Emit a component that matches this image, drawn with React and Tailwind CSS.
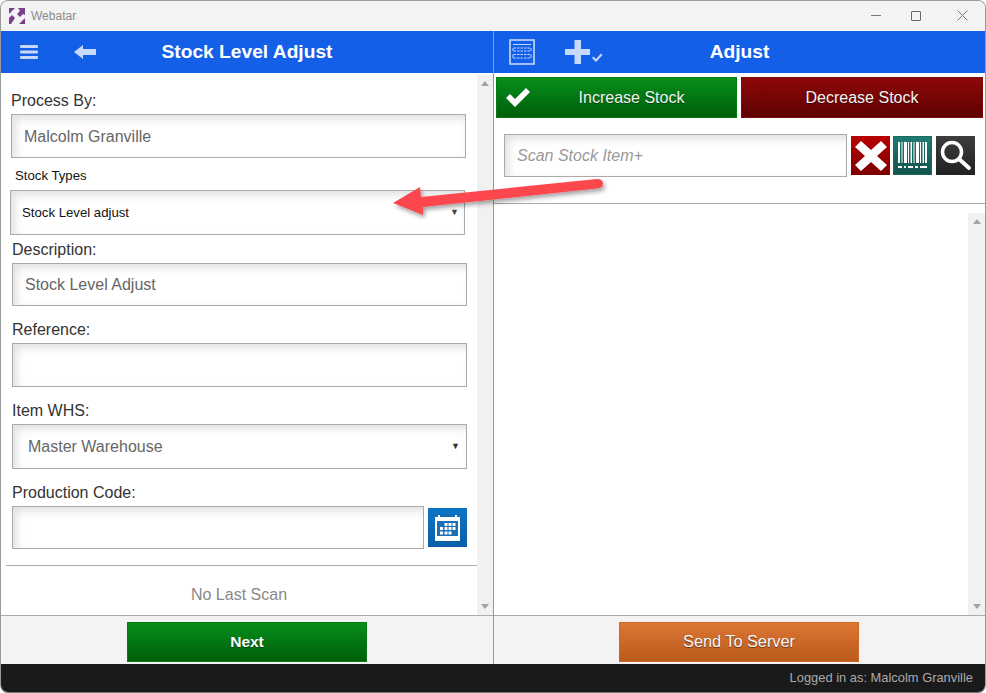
import React from 'react';

const inputCls = 'border border-[#aaa] bg-white shadow-[inset_4px_4px_9px_rgba(0,0,0,0.12)] flex items-center';

function Field({ label, value, className, boxCls, select }) {
  return (
    <div className={className}>
      <div className="text-[16px] leading-[18px] text-[#333] mb-[4px]">{label}</div>
      <div className={`${inputCls} ${boxCls} pr-[6px] text-[16px] text-[#666] justify-between`}>
        <span>{value}</span>
        {select && <span className="text-[9px] text-[#333]">▼</span>}
      </div>
    </div>
  );
}

function ScrollBar({ className }) {
  return (
    <div className={`bg-[#f1f1f1] flex flex-col justify-between items-center py-[6px] shrink-0 ${className}`}>
      <div className="w-0 h-0 border-x-[4px] border-x-transparent border-b-[5px] border-b-[#a3a3a3]" />
      <div className="w-0 h-0 border-x-[4px] border-x-transparent border-t-[5px] border-t-[#a3a3a3]" />
    </div>
  );
}

function Logo() {
  return (
    <svg width="16" height="16" viewBox="0 0 16 16" className="shrink-0">
      <path d="M0 0h6l-6 6z" fill="#7c3f8c" />
      <path d="M0 16v-6l3-3 3 3-4 6z" fill="#7c3f8c" />
      <path d="M9 0h7v7l-2-1-3 3-3-3 3-3z" fill="#7c3f8c" />
      <path d="M16 16h-6l6-6z" fill="#7c3f8c" />
    </svg>
  );
}

function KeyboardIcon() {
  return (
    <svg width="26" height="26" viewBox="0 0 26 26" fill="none" stroke="#c6d8fb">
      <rect x="1" y="1" width="24" height="24" strokeWidth="1.6" />
      <path d="M4 5.500h18" strokeWidth="1" />
      <path d="M4.500 9h17M4.500 12h17M4.500 15.500h17M4.500 19h17" strokeWidth="1.2" strokeDasharray="2.5 1" />
      <path d="M4 9v3M22 9v3M4 15.500v3.500M22 15.500v3.500" strokeWidth="1" />
    </svg>
  );
}

function PlusCheck() {
  return (
    <svg width="40" height="26" viewBox="0 0 40 26" fill="#c6d8fb">
      <path d="M9.500 1h6.500v9h9v6h-9v9h-6.500v-9H0v-6h9.500z" />
      <path d="M27 19l1.500-1.500 2.500 2.500L36 14.500l1.500 1.500-6.500 7z" />
    </svg>
  );
}

function Barcode() {
  return (
    <svg width="29" height="27" viewBox="0 0 29 27" fill="#fff">
      <path d="M0 0h2v21H0zM3.500 0h1v21h-1zM6 0h3v21H6zM10 0h1v21h-1zM12.500 0h1.500v21h-1.500zM15.500 0h1v21h-1zM18 0h3v21h-3zM22 0h1v21h-1zM24.500 0h1.500v21h-1.500zM27 0h2v21h-2z" />
      <path d="M0 24h4v2H0zM6 24h2v2H6zM10 24h5v2h-5zM17 24h3v2h-3zM22 24h7v2h-7z" />
    </svg>
  );
}

function Search() {
  return (
    <svg width="33" height="33" viewBox="0 0 33 33" fill="none" stroke="#fff">
      <circle cx="13" cy="13" r="9.500" strokeWidth="3.500" />
      <path d="M20 20l10 9" strokeWidth="4" strokeLinecap="round" />
    </svg>
  );
}

function Calendar() {
  return (
    <svg width="25" height="26" viewBox="0 0 25 26">
      <path d="M0 2h3v-2h2v2h15v-2h2v2h3v24H0z" fill="#fff" />
      <path d="M2 6h21v18H2z" fill="#1a6fb8" />
      <path d="M9.500 8h3v3h-3zM13.500 8h3v3h-3zM17.500 8h3v3h-3zM5 12h3v3H5zM9.500 12h3v3h-3zM13.500 12h3v3h-3zM17.500 12h3v3h-3zM5 16.500h3v3H5zM9.500 16.500h3v3h-3zM13.500 16.500h3v3h-3z" fill="#fff" />
      <path d="M2 21h21v3H2z" fill="#fff" />
    </svg>
  );
}

function Arrow() {
  return (
    <svg className="absolute left-[385px] top-[170px]" width="230" height="50" viewBox="0 0 230 50">
      <defs>
        <filter id="sh" x="-10%" y="-30%" width="120%" height="170%">
          <feDropShadow dx="2" dy="3" stdDeviation="2" floodColor="#000" floodOpacity="0.35" />
        </filter>
      </defs>
      <g filter="url(#sh)">
        <path d="M8 33 L35 17 L36 27 L212 9 Q218 9 218 13.500 Q218 18 212 18.500 L38 37 L38 45 Z" fill="#fd4650" />
      </g>
    </svg>
  );
}

export default function App() {
  return (
    <div className="relative w-[986px] h-[693px] bg-white overflow-hidden" style={{ fontFamily: '"Liberation Sans", Arial, sans-serif' }}>
      <div className="absolute inset-0 rounded-[8px] border border-[#9a9a9a] border-b-[#777] overflow-hidden flex flex-col">
        {/* title bar */}
        <div className="h-[30px] bg-[#f3f3f3] flex items-center pl-[8px] shrink-0">
          <Logo />
          <span className="ml-[6px] text-[12px] text-[#8b8b8b]">Webatar</span>
          <div className="ml-auto flex items-center text-[#666] -mt-[1px]">
            <div className="w-[10px] h-px bg-[#777] mr-[30px]" />
            <div className="w-[10px] h-[10px] border border-[#666] rounded-[1px] mr-[36px]" />
            <svg width="11" height="11" viewBox="0 0 11 11" stroke="#777" className="mr-[17px]"><path d="M0.500 0.500l10 10M10.500 0.500l-10 10" /></svg>
          </div>
        </div>

        {/* body */}
        <div className="flex flex-1 min-h-0">
          {/* left */}
          <div className="w-[493px] border-r border-[#999] flex flex-col shrink-0">
            <div className="h-[42px] bg-[#145fe8] flex items-center relative shrink-0">
              <svg width="18" height="14" viewBox="0 0 18 14" fill="#c6d8fb" className="ml-[19px]">
                <rect y="0" width="18" height="3" rx="1" />
                <rect y="5.500" width="18" height="3" rx="1" />
                <rect y="11" width="18" height="3" rx="1" />
              </svg>
              <svg width="22" height="14" viewBox="0 0 22 14" fill="#c6d8fb" className="ml-[36px]">
                <path d="M0 7l9-7v4h13v6H9v4z" />
              </svg>
              <div className="absolute inset-x-0 text-center text-white font-bold text-[19.2px]">Stock Level Adjust</div>
            </div>
            <div className="flex flex-1 min-h-0 bg-white">
              <div className="flex-1 min-w-0 flex flex-col">
                <div className="pl-[10px] pr-[11px] pt-[20px]">
                  <div className="text-[16px] leading-[18px] text-[#333] mb-[4px] -mt-[1px]">Process By:</div>
                  <div className={`${inputCls} h-[44px] pl-[12px] pt-[1px] text-[16px] text-[#666]`}>Malcolm Granville</div>
                </div>
                <div className="pl-[9px] pr-[12px]">
                  <div className="pl-[5px] mt-[10px] mb-[7px] text-[13.200px] leading-[15px] text-[#111]">Stock Types</div>
                  <div className={`${inputCls} h-[45px] pl-[11px] pr-[5px] text-[13.200px] text-[#111] justify-between`}>
                    <span>Stock Level adjust</span>
                    <span className="text-[9px] text-[#444]">▼</span>
                  </div>
                </div>
                <Field label="Description:" value="Stock Level Adjust" className="pl-[11px] pr-[10px] mt-[6px]" boxCls="h-[43px] pl-[12px]" />
                <Field label="Reference:" value="" className="pl-[11px] pr-[10px] mt-[15px]" boxCls="h-[44px] pl-[12px]" />
                <Field label="Item WHS:" value="Master Warehouse" select className="pl-[11px] pr-[10px] mt-[15px]" boxCls="h-[45px] pl-[15px]" />
                <div className="pl-[11px] pr-[10px] mt-[15px]">
                  <div className="text-[16px] leading-[18px] text-[#333] mb-[4px]">Production Code:</div>
                  <div className="flex items-center gap-[4px]">
                    <div className={`${inputCls} h-[43px] flex-1`} />
                    <div className="w-[39px] h-[39px] bg-gradient-to-b from-[#0d74c4] to-[#0a5fa8] flex items-center justify-center">
                      <Calendar />
                    </div>
                  </div>
                </div>
                <div className="ml-[5px] mt-[16px] border-t border-[#aaa]" />
                <div className="text-center text-[16px] text-[#888] mt-[17px]">No Last Scan</div>
              </div>
              <ScrollBar className="w-[16px] mt-[2px]" />
            </div>
            <div className="h-[49px] border-t border-[#aaa] bg-[#f3f3f3] flex justify-center pt-[6px] shrink-0">
              <div className="w-[240px] h-[40px] border border-[#067a12] bg-gradient-to-b from-[#078f1c] to-[#015e0a] text-white font-bold text-[15.500px] pb-[1px] flex items-center justify-center [text-shadow:0_1px_1px_rgba(0,0,0,0.4)]">Next</div>
            </div>
          </div>

          {/* right */}
          <div className="flex-1 min-w-0 flex flex-col">
            <div className="h-[42px] bg-[#145fe8] flex items-center relative shrink-0">
              <div className="ml-[15px] flex"><KeyboardIcon /></div>
              <div className="ml-[30px] flex"><PlusCheck /></div>
              <div className="absolute inset-x-0 text-center text-white font-bold text-[19.2px]">Adjust</div>
            </div>
            <div className="flex-1 min-h-0 flex flex-col bg-white">
              <div className="flex gap-[4px] pl-[2px] pr-[2px] pt-[4px]">
                <div className="relative w-[241px] h-[41px] border border-[#067a12] bg-gradient-to-b from-[#078f1c] to-[#015e0a] text-[#f3f3f3] text-[16px] flex items-center justify-center pl-[30px] [text-shadow:0_1px_1px_rgba(0,0,0,0.4)]">
                  <svg className="absolute left-[9px] top-[10px]" width="24" height="19" viewBox="0 0 24 19" fill="#fff">
                    <path d="M0 10l4-4 5 5L20 0l4 4L9 19z" />
                  </svg>
                  Increase Stock
                </div>
                <div className="w-[242px] h-[41px] border border-[#7d0a0a] bg-gradient-to-b from-[#8e0808] to-[#5f0202] text-[#f3f3f3] text-[16px] flex items-center justify-center [text-shadow:0_1px_1px_rgba(0,0,0,0.4)]">Decrease Stock</div>
              </div>
              <div className="flex items-center pl-[10px] pt-[16px]">
                <div className={`${inputCls} w-[343px] h-[43px] pl-[12px] text-[16px] italic text-[#999]`}>Scan Stock Item+</div>
                <div className="w-[39px] h-[39px] ml-[4px] bg-gradient-to-b from-[#b80202] to-[#7e0000] flex items-center justify-center">
                  <svg width="32" height="30" viewBox="0 0 32 30" fill="#fff">
                    <path d="M6 0l10 9L26 0l6 6-10 9 10 9-6 6-10-9-10 9-6-6 10-9L0 6z" />
                  </svg>
                </div>
                <div className="w-[39px] h-[39px] ml-[3px] border border-[#1a6a60] bg-gradient-to-b from-[#227b70] to-[#12534d] flex items-center justify-center">
                  <Barcode />
                </div>
                <div className="w-[39px] h-[39px] ml-[4px] bg-gradient-to-b from-[#3d3d3d] to-[#222] flex items-center justify-center">
                  <Search />
                </div>
              </div>
              <div className="mt-[26px] border-t border-[#aaa]" />
              <div className="flex-1 min-h-0 flex justify-end pt-[9px]">
                <ScrollBar className="w-[17px]" />
              </div>
            </div>
            <div className="h-[49px] border-t border-[#aaa] bg-[#f3f3f3] flex justify-center pt-[6px] pr-[1px] shrink-0">
              <div className="w-[240px] h-[40px] border border-[#d2661f] bg-gradient-to-b from-[#dc7634] to-[#bb5a1c] text-[#f7f7f7] text-[16.300px] pb-[1px] flex items-center justify-center [text-shadow:0_1px_1px_rgba(0,0,0,0.5)]">Send To Server</div>
            </div>
          </div>
        </div>

        {/* status bar */}
        <div className="h-[28px] bg-[#1a1a1a] flex items-center justify-end pr-[12px] text-[12.900px] text-[#aaa] shrink-0">
          Logged in as: Malcolm Granville
        </div>
      </div>
      <Arrow />
    </div>
  );
}
